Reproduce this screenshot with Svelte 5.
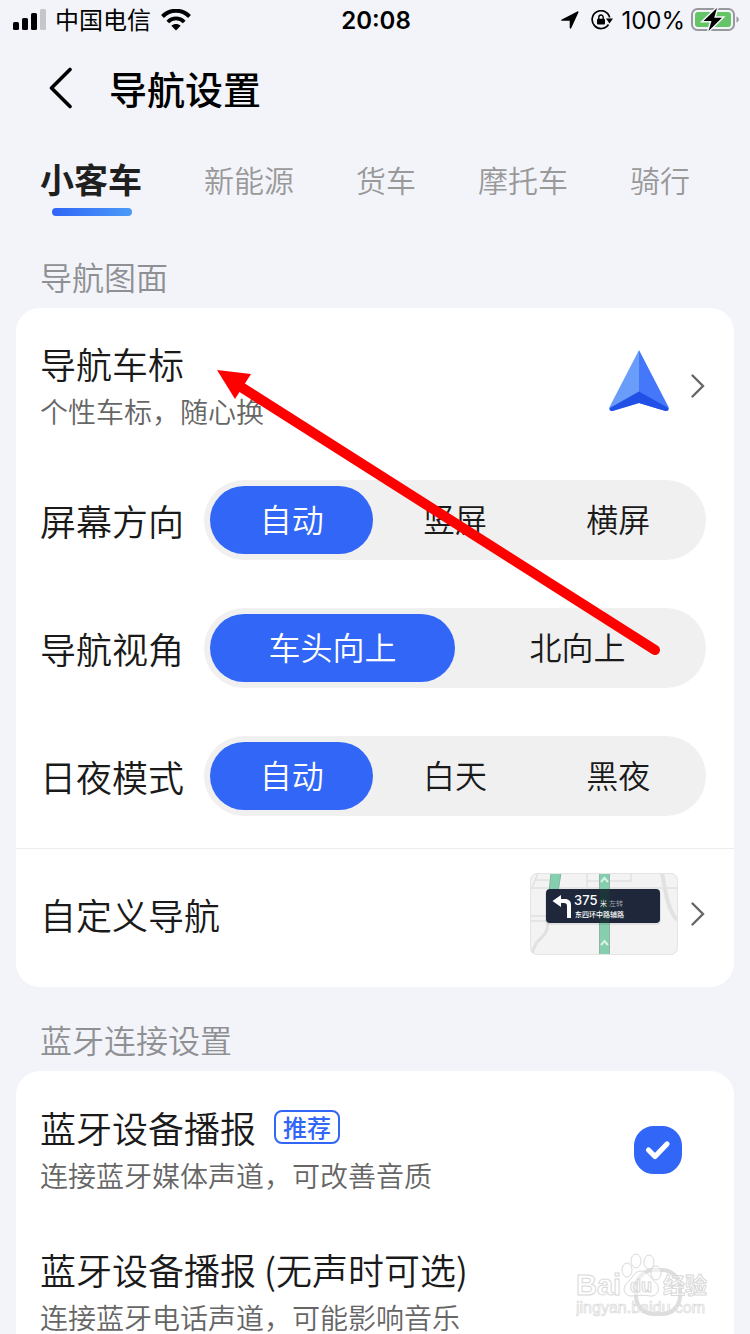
<script lang="ts">
  const tabs: string[] = ["小客车", "新能源", "货车", "摩托车", "骑行"];
  let activeTab: string = $state("小客车");

  let choices = $state([
    { id: "orientation", label: "屏幕方向", options: ["自动", "竖屏", "横屏"], value: "自动" },
    { id: "view", label: "导航视角", options: ["车头向上", "北向上"], value: "车头向上" },
    { id: "daynight", label: "日夜模式", options: ["自动", "白天", "黑夜"], value: "自动" },
  ]);

  let bluetooth = $state([
    { id: "bt-media", title: "蓝牙设备播报", tag: "推荐", note: "连接蓝牙媒体声道，可改善音质", on: true },
    { id: "bt-call", title: "蓝牙设备播报 (无声时可选)", tag: "", note: "连接蓝牙电话声道，可能影响音乐", on: false },
  ]);
</script>

{#snippet chevron()}
  <svg class="chevron" viewBox="0 0 16 28" aria-hidden="true">
    <path d="M2.500 3.500 13 14 2.500 24.500" fill="none" stroke="#666" stroke-width="2.400" stroke-linecap="round" />
  </svg>
{/snippet}

<div class="page">
  <div class="status">
    <div class="carrier">
      <svg width="34" height="22" viewBox="0 0 34 22" aria-hidden="true">
        <rect x="0" y="13" width="6" height="8" rx="1.500" />
        <rect x="9" y="9" width="6" height="12" rx="1.500" />
        <rect x="18" y="4" width="6" height="17" rx="1.500" />
        <rect x="27" y="0" width="6" height="21" rx="1.500" fill="#c5c6ca" />
      </svg>
      <span>中国电信</span>
      <svg width="30" height="22" viewBox="0 0 30 22" aria-hidden="true">
        <path d="M1.500 7.500C9 -.2 21 -.2 28.500 7.500" fill="none" stroke="#000" stroke-width="4" />
        <path d="M6.800 13C11.500 8.200 18.500 8.200 23.200 13" fill="none" stroke="#000" stroke-width="3.800" />
        <path d="M10.300 16.800c2.800-2.500 6.600-2.500 9.400 0L15 21.500z" />
      </svg>
    </div>
    <div class="time">20:08</div>
    <div class="indicators">
      <svg width="18" height="18" viewBox="0 0 18 18" aria-hidden="true">
        <path d="M.8 8.500 16.300.5c.9-.4 1.500.2 1.100 1.100L10.300 17c-.5 1-1.600.8-1.600-.4V9.800H1.300C0 9.800-.2 9 .8 8.500z" />
      </svg>
      <svg width="22" height="20" viewBox="0 0 22 20" aria-hidden="true">
        <path d="M17.500 14.500A8.900 8.900 0 1 1 18.700 7.500" fill="none" stroke="#000" stroke-width="1.700" />
        <path d="M15 8.500h7l-3.500 5z" />
        <rect x="6" y="8.800" width="8" height="5.700" rx="1" />
        <path d="M7.800 9V7.200a2.200 2.200 0 0 1 4.400 0V9" fill="none" stroke="#000" stroke-width="1.400" />
      </svg>
      <span>100%</span>
      <svg width="48" height="24" viewBox="0 0 48 24" aria-hidden="true">
        <rect x="1" y="1" width="42" height="21" rx="5.500" fill="none" stroke="#98999d" stroke-width="2" />
        <path d="M45.500 8.500c3 1 3 5 0 6z" fill="#98999d" />
        <rect x="4" y="4" width="36" height="15" rx="3" fill="#65c466" />
        <path d="M26 0 12.500 13h8L17.500 23 31 9.800h-7.800z" stroke="#f3f4f9" stroke-width="3" paint-order="stroke" />
      </svg>
    </div>
  </div>

  <header>
    <button class="back" aria-label="返回">
      <svg width="24" height="42" viewBox="0 0 24 42" aria-hidden="true">
        <path d="M21 2.500 2.500 21 21 39.500" fill="none" stroke="#000" stroke-width="3.600" stroke-linecap="round" stroke-linejoin="round" />
      </svg>
    </button>
    <h1>导航设置</h1>
  </header>

  <nav class="tabs">
    {#each tabs as tab}
      <button class:active={tab === activeTab} onclick={() => (activeTab = tab)}>{tab}</button>
    {/each}
  </nav>

  <h2>导航图面</h2>
  <section class="card">
    <button class="row marker">
      <span class="text">
        <span class="title">导航车标</span>
        <span class="note">个性车标，随心换</span>
      </span>
      <svg class="plane" width="62" height="64" viewBox="0 0 62 64" aria-hidden="true">
        <path d="M31 1 1.500 58c-1 2.500.5 4.500 3 4L31 54z" fill="#6a9dfa" />
        <path d="M31 1 60.500 58c1 2.500-.5 4.500-3 4L31 54z" fill="#4577fa" />
        <path d="M31 42.500 1.700 59c-.2 2 1 3.500 2.800 3L31 54l26.500 8c1.800.5 3-1 2.800-3z" fill="#2150e6" />
      </svg>
      {@render chevron()}
    </button>

    {#each choices as choice}
      <div class="row choice">
        <span class="title" id={choice.id}>{choice.label}</span>
        <div class="segments" role="radiogroup" aria-labelledby={choice.id}>
          {#each choice.options as option}
            <label class:picked={option === choice.value}>
              <input type="radio" name={choice.id} value={option} bind:group={choice.value} />
              {option}
            </label>
          {/each}
        </div>
      </div>
    {/each}

    <button class="row custom">
      <span class="title">自定义导航</span>
      <svg class="map" width="148" height="82" viewBox="0 0 148 82" aria-hidden="true">
        <defs>
          <clipPath id="map-clip"><rect width="148" height="82" rx="7" /></clipPath>
        </defs>
        <g clip-path="url(#map-clip)">
          <rect width="148" height="82" fill="#f3f3f3" />
          <g fill="none" stroke="#e1e1e2" stroke-width="1.500">
            <path d="M0 15h148M6 7h22M8 0 2 15M57 0v14M57 8h44V0M0 43h18M0 48h18" />
            <path d="M132 0c3 15 5 36 15 47" stroke-width="4" />
            <path d="M18 48c0 20-13 14-16 34" stroke-width="3" />
          </g>
          <path d="M21 0h10l-3 19H19z" fill="#86cfae" stroke="#7cbb9f" />
          <path d="M69.500 0h10v82h-10z" fill="#86cfae" stroke="#8fb3a4" />
          <path d="m71 9 3.500-4L78 9M71 72l3.500-4 3.500 4" fill="none" stroke="#d6f3e5" stroke-width="2" />
          <rect x="15" y="17" width="116" height="35" rx="5" fill="#000" opacity=".08" />
          <rect x="16" y="16" width="114" height="34" rx="4" fill="#1e283a" />
          <path d="M69.500 16h10v34h-10z" fill="#1d3538" />
          <path d="M22.500 28 31 22v4h4c4 0 6 2.500 6 6v13h-4V33c0-2-1-3-3-3h-3v4z" fill="#fff" />
          <text class="distance" x="44" y="32" fill="#fff">375</text>
          <text x="70" y="33" font-size="7" fill="#fff">米</text>
          <text x="79" y="33" font-size="7" fill="#a6abb3">左转</text>
          <text x="45" y="44" font-size="7" font-weight="500" fill="#fff">东四环中路辅路</text>
        </g>
        <rect x=".5" y=".5" width="147" height="81" rx="7" fill="none" stroke="#e4e4e5" />
      </svg>
      {@render chevron()}
    </button>
  </section>

  <h2>蓝牙连接设置</h2>
  <section class="card last">
    {#each bluetooth as item}
      <label class="row device" for={item.id}>
        <span class="text">
          <span class="title">{item.title}{#if item.tag}<em>{item.tag}</em>{/if}</span>
          <span class="note">{item.note}</span>
        </span>
        <span class="check" class:on={item.on}>
          <input type="checkbox" id={item.id} bind:checked={item.on} />
          {#if item.on}
            <svg width="40" height="40" viewBox="4 4 40 40" aria-hidden="true">
              <path d="m14.500 24 6.500 6.500L33 18" fill="none" stroke="#fff" stroke-width="5.200" stroke-linecap="round" stroke-linejoin="round" />
            </svg>
          {/if}
        </span>
      </label>
    {/each}
  </section>

  <svg class="pointer" width="446" height="292" viewBox="0 0 446 292" aria-hidden="true">
    <path d="M25 17 439 280" stroke="#fe0000" stroke-width="10" stroke-linecap="round" />
    <path d="M1 0 35 4 19 29z" fill="#fe0000" />
  </svg>

  <svg class="watermark" width="140" height="70" viewBox="0 0 140 70" aria-hidden="true">
    <g fill="#fff" fill-opacity=".5" stroke="#d9d9d9" stroke-width="1">
      <ellipse cx="51" cy="19" rx="5" ry="7" />
      <ellipse cx="60" cy="10" rx="5" ry="7" />
      <ellipse cx="73" cy="11" rx="5" ry="7" />
      <ellipse cx="80" cy="22" rx="5" ry="7" />
      <path d="M65 20c-7 0-9 8-14 12-6 5-2 14 5 13 6-1 12-1 18 0 8 1 11-8 6-13-5-4-8-12-15-12z" />
      <text x="0" y="44" font-size="29" font-weight="700">Bai</text>
      <text x="54" y="41" font-size="18" font-weight="700">du</text>
      <text class="han" x="87" y="42" font-size="22" font-weight="700">经验</text>
      <text x="0" y="62" font-size="16" stroke-width=".7">jingyan.baidu.com</text>
    </g>
  </svg>
</div>

<style>
  :global(body) {
    background: #f3f4f9;
  }

  .page {
    position: relative;
    display: flex;
    flex-direction: column;
    min-height: 100vh;
    box-sizing: border-box;
    overflow: hidden;
    color: #1a1a1a;
    font-family: "Noto Sans CJK SC", "Liberation Sans", sans-serif;
    font-weight: 350;
  }

  button {
    border: 0;
    padding: 0;
    background: none;
    color: inherit;
    font: inherit;
    text-align: left;
    cursor: pointer;
  }

  svg {
    display: block;
    flex: none;
  }

  .status {
    display: grid;
    grid-template-columns: 1fr auto 1fr;
    align-items: center;
    height: 40px;
    padding: 0 11px 0 13px;
    color: #000;
    font-family: Inter, "Noto Sans CJK SC", sans-serif;
    font-size: 24px;
    font-weight: 400;
    line-height: 38px;

    span,
    .time {
      padding-top: 2px;
    }
  }

  .carrier,
  .indicators {
    display: flex;
    align-items: center;
    gap: 8px;
  }

  .carrier svg:last-child {
    margin-left: 2px;
  }

  .time {
    font-weight: 600;
  }

  .indicators {
    justify-content: flex-end;

    svg:first-child {
      margin-right: 4px;
    }

    svg:last-child {
      margin-left: -2px;
    }
  }

  header {
    display: flex;
    align-items: center;
    gap: 36px;
    height: 96px;
    padding-left: 49px;
  }

  h1 {
    margin: 0;
    color: #000;
    font-size: 38px;
    font-weight: 500;
    line-height: 56px;
  }

  .tabs {
    display: flex;
    justify-content: space-between;
    height: 88px;
    padding: 0 60px 0 40px;

    button {
      position: relative;
      height: 88px;
      padding-bottom: 2px;
      color: #999;
      font-size: 30px;
      line-height: 86px;
      white-space: nowrap;
    }

    .active {
      color: #1f1f1f;
      font-size: 34px;
      font-weight: 700;

      &:after {
        content: "";
        position: absolute;
        left: 12px;
        bottom: 8px;
        width: 80px;
        height: 8px;
        border-radius: 4px;
        background: linear-gradient(90deg, #3065f6, #4b9bf8);
      }
    }
  }

  h2 {
    margin: 0;
    padding: 28px 40px 8px;
    color: #8f9093;
    font-size: 32px;
    font-weight: 350;
    line-height: 48px;
  }

  .card {
    margin: 0 16px;
    border-radius: 24px;
    background: #fff;
  }

  .row {
    display: flex;
    align-items: center;
    box-sizing: border-box;
    width: 100%;
    padding: 0 28px 0 24px;
  }

  .text {
    flex: 1;
    padding-top: 2px;
  }

  .title {
    display: flex;
    align-items: center;
    font-size: 36px;
    line-height: 48px;
    white-space: pre;
  }

  .note {
    display: block;
    color: #666;
    font-size: 28px;
    line-height: 48px;
  }

  .chevron {
    width: 16px;
    height: 28px;
    margin-left: 12px;
  }

  .marker {
    height: 156px;

    .plane {
      margin-bottom: 10px;
    }

    .chevron {
      margin-left: 20px;
    }
  }

  .choice {
    gap: 20px;
    padding: 16px 28px 32px 24px;
  }

  .segments {
    display: flex;
    flex: 1;
    padding: 6px;
    border-radius: 40px;
    background: #f0f0f0;

    label {
      flex: 1;
      padding-bottom: 4px;
      border-radius: 34px;
      font-size: 32px;
      line-height: 64px;
      text-align: center;
      cursor: pointer;
    }

    .picked {
      background: #3166f7;
      color: #fff;
    }

    input {
      position: absolute;
      opacity: 0;
      pointer-events: none;
    }
  }

  .custom {
    height: 139px;
    padding-bottom: 8px;
    border-top: 1px solid #ececec;

    .title {
      flex: 1;
    }
  }

  .distance {
    font-family: Inter, sans-serif;
    font-size: 13px;
    font-weight: 500;
  }

  .last {
    flex: 1;
    padding-top: 8px;
    border-radius: 24px 24px 0 0;
  }

  .device {
    height: 142px;
    padding-right: 52px;
    cursor: pointer;

    em {
      margin-left: 18px;
      padding: 0 7px;
      border: 2px solid #3166f7;
      border-radius: 8px;
      color: #3166f7;
      font-size: 24px;
      font-style: normal;
      font-weight: 500;
      line-height: 30px;
    }
  }

  .check {
    display: grid;
    box-sizing: border-box;
    width: 48px;
    height: 48px;
    border: 4px solid #dedede;
    border-radius: 20px;
    place-items: center;

    &.on {
      border-color: #3166f7;
      background: #3166f7;
    }

    input,
    svg {
      grid-area: 1 / 1;
    }

    input {
      appearance: none;
      width: 40px;
      height: 40px;
      margin: 0;
    }

    svg {
      pointer-events: none;
    }
  }

  .pointer {
    position: absolute;
    top: 370px;
    left: 216px;
    pointer-events: none;
  }

  .watermark {
    position: absolute;
    top: 1251px;
    right: 34px;
    font-family: "Liberation Sans", sans-serif;
    pointer-events: none;

    .han {
      font-family: "Noto Sans CJK SC", sans-serif;
    }
  }
</style>
